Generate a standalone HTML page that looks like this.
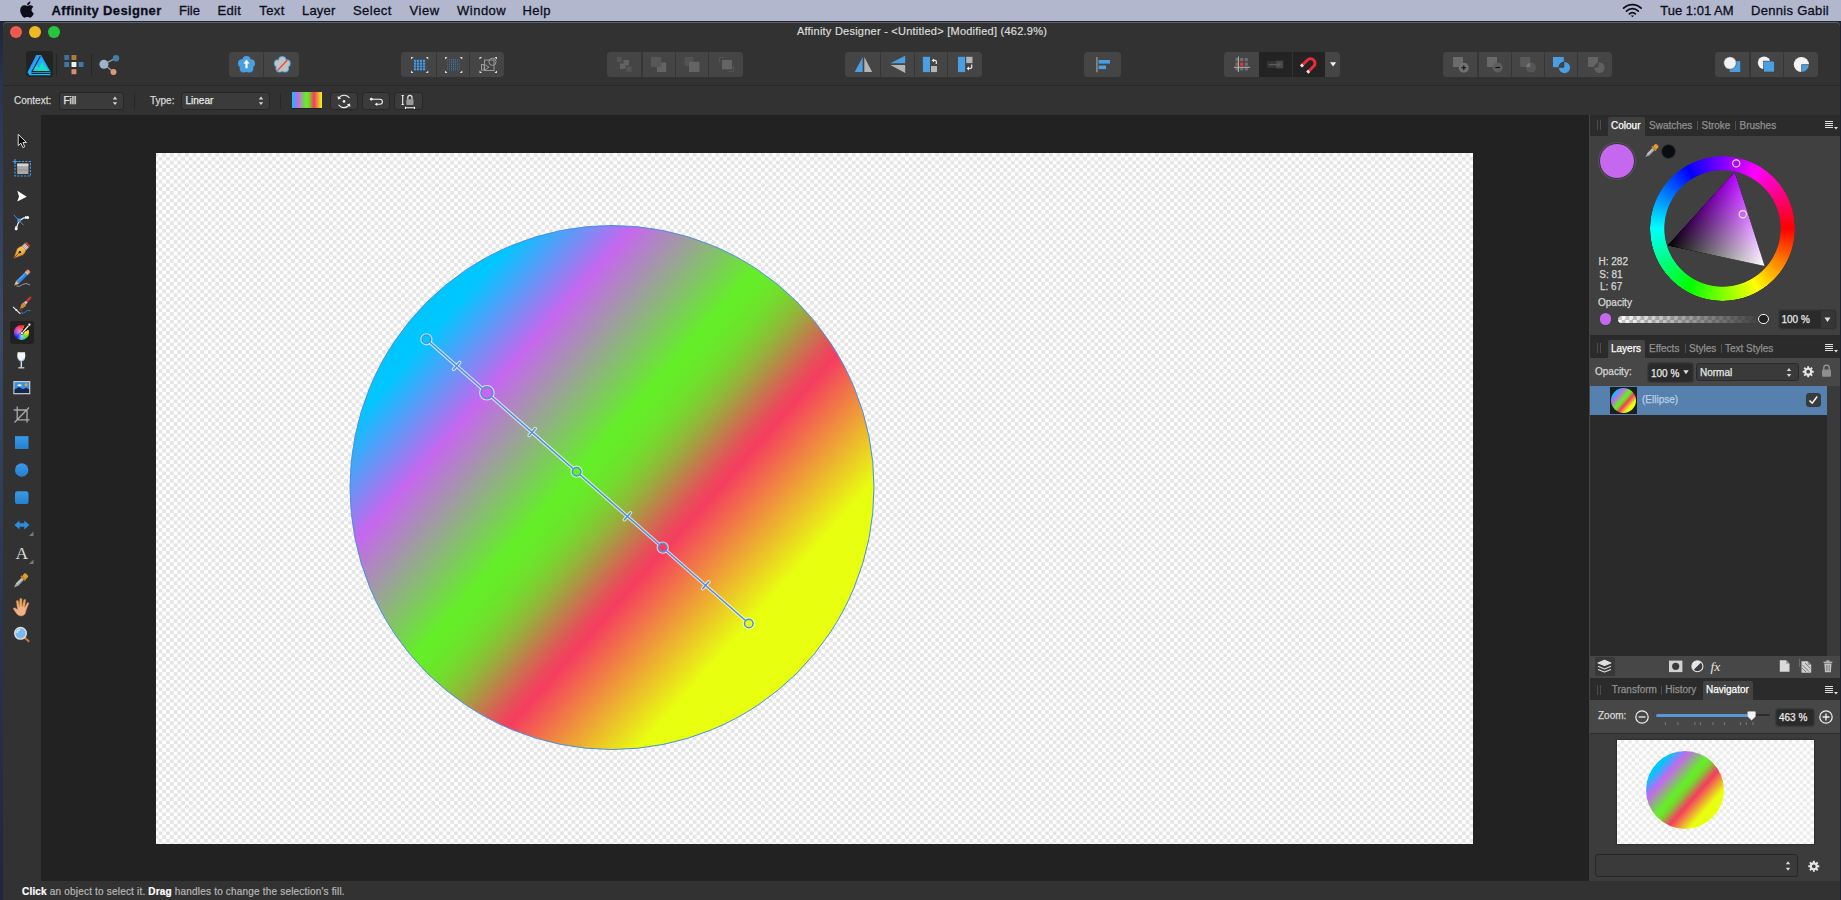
<!DOCTYPE html>
<html lang="en">
<head>
<meta charset="utf-8">
<title>Affinity Designer</title>
<style>
*{box-sizing:border-box;margin:0;padding:0}
html,body{width:1841px;height:900px;overflow:hidden;background:linear-gradient(180deg,#1a2036 0,#2a3550 10%,#3a4a68 35%,#2e3a55 60%,#262e48 80%,#1e2640 100%);font-family:"Liberation Sans",sans-serif;}
.abs{position:absolute}
#menubar{position:absolute;left:0;top:0;width:1841px;height:21px;background:#b2b7ce;color:#0b0e1a;font-size:13px;}
#menubar span{position:absolute;top:2.600px;line-height:16px;white-space:nowrap;-webkit-text-stroke:.3px}
#win{position:absolute;left:3px;top:22px;width:1836.600px;height:878px;background:#323232;border-radius:4px 4px 0 0;overflow:hidden;box-shadow:inset 0 1px 0 #606060}
#title{-webkit-text-stroke:.2px;position:absolute;left:0;top:0;width:1838px;height:22px;color:#dcdcdc;font-size:11px;letter-spacing:.24px;text-align:center;line-height:19px}
.tl{position:absolute;top:4px;width:12px;height:12px;border-radius:50%}
#sep1{position:absolute;left:0;top:63px;width:1838px;height:1px;background:#282828}
.grp{position:absolute;top:30px;height:26px;background:#454545;border-radius:4px;overflow:hidden}
.grp i{position:absolute;top:0;width:1px;height:26px;background:#323232}
#ctx{position:absolute;left:0;top:64px;width:1838px;height:29px;font-size:10px;color:#d6d6d6}
.dd{position:absolute;top:6px;height:18px;background:#2b2b2b;border:1px solid #444444;border-radius:3px;color:#dedede;font-size:10px;line-height:16px;padding-left:4px}
#tools{position:absolute;left:0;top:93px;width:38px;height:766px;background:#323232}
#canvas{position:absolute;left:38px;top:93px;width:1548px;height:766px;background:#222222}
#doc{position:absolute;left:115px;top:37.600px;width:1316.500px;height:691px;background:repeating-conic-gradient(#e5e5e5 0 25%,#fff 0 50%) 2.500px 0.100px/7.582px 7.582px}
#right{position:absolute;left:1586px;top:93px;width:252px;height:766px;background:#454545}
#status{position:absolute;left:0;top:859px;width:1838px;height:19px;background:#323232;color:#b8b8b8;font-size:10px;line-height:22px;letter-spacing:.19px;-webkit-text-stroke:.2px}

#L{position:absolute;left:0;top:0;width:1841px;height:900px;font-size:10px;color:#d8d8d8}
#L div,#L span,#L svg{position:absolute}
.t{line-height:12px;white-space:nowrap;-webkit-text-stroke:.25px}
.tabbar{left:1590px;width:251px;height:20.600px;background:#2b2b2b}
.tab{background:#404040;height:18.600px;border-radius:2px 2px 0 0}
.grey{color:#8f8f8f}
.pb{background:#404040;left:1590px;width:251px}
.inp{background:#2a2a2a;border:1px solid #303030;border-radius:3px;box-shadow:0 0 0 1px #3a3a3a}
</style>
</head>
<body>
<div id="menubar">
<svg class="abs" style="left:19.5px;top:1.2px" width="14" height="17" viewBox="0 20 384 470"><path fill="#0b0e1a" d="M318.7 268.7c-.2-36.700 16.400-64.400 50-84.800-18.800-26.900-47.200-41.700-84.700-44.600-35.500-2.800-74.300 20.700-88.500 20.700-15 0-49.400-19.700-76.400-19.700C63.300 141.200 4 184.800 4 273.500q0 39.300 14.400 81.200c12.800 36.700 59 126.700 107.200 125.200 25.200-.6 43-17.900 75.800-17.900 31.800 0 48.300 17.900 76.400 17.900 48.600-.7 90.400-82.500 102.600-119.300-65.200-30.700-61.700-90-61.700-91.900zm-56.600-164.200c27.300-32.400 24.800-61.900 24-72.500-24.100 1.400-52 16.400-67.900 34.900-17.500 19.800-27.800 44.300-25.600 71.900 26.100 2 49.900-11.400 69.500-34.300z"/></svg>
<span style="left:51.5px;font-weight:bold;letter-spacing:.36px">Affinity Designer</span>
<span style="left:179px">File</span>
<span style="left:217.5px;letter-spacing:.3px">Edit</span>
<span style="left:259.3px;letter-spacing:.4px">Text</span>
<span style="left:302px;letter-spacing:.2px">Layer</span>
<span style="left:353px;letter-spacing:.45px">Select</span>
<span style="left:409.5px;letter-spacing:.6px">View</span>
<span style="left:457px;letter-spacing:.5px">Window</span>
<span style="left:522.5px;letter-spacing:.4px">Help</span>
<svg class="abs" style="left:1620px;top:2px" width="25" height="17" viewBox="1620 2 25 17"><g fill="none" stroke="#0b0e1a" stroke-width="1.7" stroke-linecap="round"><path d="M1623.6 8.200a12.400 12.400 0 0 1 17.600 0"/><path d="M1626.500 11.100a8.300 8.300 0 0 1 11.800 0"/><path d="M1629.400 13.900a4.200 4.200 0 0 1 6 0"/></g><path d="M1632.400 17.300l-1.700 -1.800h3.400z" fill="#0b0e1a"/></svg>
<span style="left:1660.300px">Tue 1:01 AM</span>
<span style="left:1751px;letter-spacing:.3px">Dennis Gabil</span>
</div>
<div id="win">
<div id="title">Affinity Designer - &lt;Untitled&gt; [Modified] (462.9%)</div>
<div class="tl" style="left:7px;background:#f25a4e"></div>
<div class="tl" style="left:26px;background:#f0b823"></div>
<div class="tl" style="left:45px;background:#27c73d"></div>
<div id="sep1"></div>
<div id="ctx"></div>
<div id="tools"></div>
<div id="canvas">
<div id="doc"></div>
<svg class="abs" style="left:0;top:0" width="1548" height="766" viewBox="41 115 1548 766">
<defs><linearGradient id="g1" gradientUnits="userSpaceOnUse" x1="426.4" y1="339.3" x2="748.8" y2="623.5">
<stop offset="0" stop-color="#00c6ff"/><stop offset="0.1878" stop-color="#c667ef"/><stop offset="0.4659" stop-color="#64ee28"/><stop offset="0.4830" stop-color="#65ed28"/><stop offset="0.5002" stop-color="#67ea29"/><stop offset="0.5173" stop-color="#6ae62a"/><stop offset="0.5344" stop-color="#6fe12c"/><stop offset="0.5516" stop-color="#75d92f"/><stop offset="0.5687" stop-color="#7dd031"/><stop offset="0.5858" stop-color="#86c435"/><stop offset="0.6029" stop-color="#91b739"/><stop offset="0.6201" stop-color="#9ea73e"/><stop offset="0.6372" stop-color="#ab9743"/><stop offset="0.6543" stop-color="#ba8548"/><stop offset="0.6715" stop-color="#c8744e"/><stop offset="0.6886" stop-color="#d66353"/><stop offset="0.7057" stop-color="#e35358"/><stop offset="0.7229" stop-color="#ee465c"/><stop offset="0.7400" stop-color="#f53d5f"/><stop offset="1" stop-color="#e8ff10"/>
</linearGradient></defs>
<circle cx="612" cy="487.5" r="262" fill="url(#g1)" stroke="#4a8fe0" stroke-width="1"/>
<g fill="none" stroke="#ffffff" stroke-opacity="0.7" stroke-width="3.6" stroke-linecap="round">
<line x1="426.4" y1="339.3" x2="748.8" y2="623.5"/><path d="M453.7 369.3L459.7 362.5M529.2 435.4L535.2 428.6M624.4 519.7L630.4 512.9M702.8 588.6L708.8 581.8"/><circle cx="426.4" cy="339.3" r="4.3"/><circle cx="486.9" cy="392.7" r="6.0"/><circle cx="576.6" cy="471.7" r="4.3"/><circle cx="662.7" cy="547.6" r="4.3"/><circle cx="748.8" cy="623.5" r="4.3"/>
</g>
<g stroke="#4a90e2" stroke-width="1.5" stroke-linecap="round">
<line x1="426.4" y1="339.3" x2="748.8" y2="623.5"/><path d="M453.7 369.3L459.7 362.5M529.2 435.4L535.2 428.6M624.4 519.7L630.4 512.9M702.8 588.6L708.8 581.8"/><circle cx="426.4" cy="339.3" r="4.3" fill="#00c6ff"/><circle cx="486.9" cy="392.7" r="6.0" fill="#c667ef"/><circle cx="576.6" cy="471.7" r="4.3" fill="#64ee28"/><circle cx="662.7" cy="547.6" r="4.3" fill="#f53d5f"/><circle cx="748.8" cy="623.5" r="4.3" fill="#e8ff10"/>
</g>
</svg>
</div>
<div id="right"></div>
<div id="status"><span class="abs" style="left:19px"><b style="color:#fff">Click</b> an object to select it. <b style="color:#fff">Drag</b> handles to change the selection's fill.</span></div>
</div>

<div id="L">

<div style="left:1839.600px;top:25px;width:1.400px;height:875px;background:#1c2238;z-index:9"></div>
<!-- toolbar -->
<div style="left:228.5px;top:52px;width:70.3px;height:24.8px;background:#454545;border-radius:3.5px"></div>
<div style="left:263.2px;top:52px;width:1.2px;height:24.8px;background:#363636"></div>
<div style="left:401.0px;top:52px;width:103.0px;height:24.8px;background:#454545;border-radius:3.5px"></div>
<div style="left:435.7px;top:52px;width:1.2px;height:24.8px;background:#363636"></div>
<div style="left:468.9px;top:52px;width:1.2px;height:24.8px;background:#363636"></div>
<div style="left:606.7px;top:52px;width:136.3px;height:24.8px;background:#454545;border-radius:3.5px"></div>
<div style="left:641.4px;top:52px;width:1.2px;height:24.8px;background:#363636"></div>
<div style="left:674.8px;top:52px;width:1.2px;height:24.8px;background:#363636"></div>
<div style="left:708.0px;top:52px;width:1.2px;height:24.8px;background:#363636"></div>
<div style="left:845.3px;top:52px;width:136.7px;height:24.8px;background:#454545;border-radius:3.5px"></div>
<div style="left:879.8px;top:52px;width:1.2px;height:24.8px;background:#363636"></div>
<div style="left:913.6px;top:52px;width:1.2px;height:24.8px;background:#363636"></div>
<div style="left:946.8px;top:52px;width:1.2px;height:24.8px;background:#363636"></div>
<div style="left:1084.0px;top:52px;width:37.3px;height:24.8px;background:#454545;border-radius:3.5px"></div>
<div style="left:1223.5px;top:52px;width:116.5px;height:24.8px;background:#454545;border-radius:3.5px"></div>
<div style="left:1442.5px;top:52px;width:169.5px;height:24.8px;background:#454545;border-radius:3.5px"></div>
<div style="left:1477.4px;top:52px;width:1.2px;height:24.8px;background:#363636"></div>
<div style="left:1510.6px;top:52px;width:1.2px;height:24.8px;background:#363636"></div>
<div style="left:1543.8px;top:52px;width:1.2px;height:24.8px;background:#363636"></div>
<div style="left:1576.9px;top:52px;width:1.2px;height:24.8px;background:#363636"></div>
<div style="left:1714.6px;top:52px;width:103.4px;height:24.8px;background:#454545;border-radius:3.5px"></div>
<div style="left:1749.4px;top:52px;width:1.2px;height:24.8px;background:#363636"></div>
<div style="left:1782.8px;top:52px;width:1.2px;height:24.8px;background:#363636"></div>
<div style="left:1259.2px;top:52px;width:65.6px;height:24.8px;background:#232323"></div>
<div style="left:1292px;top:52px;width:1.2px;height:24.8px;background:#333"></div>
<div style="left:26px;top:51.3px;width:26.8px;height:26.2px;background:#232323;border-radius:3.5px"></div>
<div style="left:56px;top:54px;width:1px;height:21.5px;background:#252525"></div>
<div style="left:91px;top:54px;width:1px;height:21.5px;background:#252525"></div>
<svg style="left:0;top:0" width="1841" height="120" viewBox="0 0 1841 120">
<defs><linearGradient id="afg" x1="0" y1="0" x2="1" y2="1"><stop offset="0" stop-color="#2a8cff"/><stop offset="1" stop-color="#10d0f8"/></linearGradient></defs>
<path d="M36.300 55L41 55L50.300 71.500L50.300 75.300L29.500 75.300L27.500 72.200Z" fill="url(#afg)"/>
<path d="M40.300 56.200L32 71.600H49.800M31.500 73.500h18.500" fill="none" stroke="#1a2436" stroke-width="1.100"/>
<path d="M33.600 70.800L37 65.300L39 68.500L41.800 61.500L47.500 70.800z" fill="#18e8b0" opacity=".8"/>
<rect x="64.3" y="55.0" width="4.9" height="5" fill="#3d6f9e"/><rect x="71.5" y="55.0" width="4.9" height="5" fill="#b07a3c"/><rect x="64.3" y="62.0" width="4.9" height="5" fill="#3f78a8"/><rect x="71.5" y="62.0" width="4.9" height="5" fill="#f2f2f2"/><rect x="78.6" y="62.0" width="4.9" height="5" fill="#3f78b0"/><rect x="71.5" y="69.2" width="4.9" height="5" fill="#d8906c"/>
<path d="M104 64.2L116 58.2M104 64.2L113.5 72.1" stroke="#9a9a9a" stroke-width="1.3"/><circle cx="103.9" cy="64.2" r="4.5" fill="#9fb2cc"/><circle cx="116" cy="58.2" r="3.2" fill="#3f7fa8"/><circle cx="113.5" cy="72.1" r="3" fill="#dc9874"/>
<g fill="#4a9fe2"><circle cx="246.50" cy="60.20" r="4.10"/><circle cx="250.87" cy="63.38" r="4.10"/><circle cx="249.20" cy="68.52" r="4.10"/><circle cx="243.80" cy="68.52" r="4.10"/><circle cx="242.13" cy="63.38" r="4.10"/><circle cx="246.50" cy="64.80" r="4.60"/></g><path d="M246.5 59.5l3 4h-1.9v4.8h-2.2v-4.8h-1.9z" fill="#fff"/>
<g fill="#4a9fe2"><circle cx="282.30" cy="60.20" r="4.10"/><circle cx="286.67" cy="63.38" r="4.10"/><circle cx="285.00" cy="68.52" r="4.10"/><circle cx="279.60" cy="68.52" r="4.10"/><circle cx="277.93" cy="63.38" r="4.10"/><circle cx="282.30" cy="64.80" r="4.60"/></g><g fill="#c2c2c2"><circle cx="282.30" cy="60.40" r="3.30"/><circle cx="286.48" cy="63.44" r="3.30"/><circle cx="284.89" cy="68.36" r="3.30"/><circle cx="279.71" cy="68.36" r="3.30"/><circle cx="278.12" cy="63.44" r="3.30"/><circle cx="282.30" cy="64.80" r="4.40"/></g><path d="M277.3 70.6L287.2 60.3" stroke="#f0452e" stroke-width="1.3"/>
<rect x="414.0" y="59.8" width="2.2" height="2.1" fill="#3f9df0"/><rect x="414.0" y="62.6" width="2.2" height="2.1" fill="#3f9df0"/><rect x="414.0" y="65.4" width="2.2" height="2.1" fill="#3f9df0"/><rect x="414.0" y="68.2" width="2.2" height="2.1" fill="#3f9df0"/><rect x="417.0" y="59.8" width="2.2" height="2.1" fill="#3f9df0"/><rect x="417.0" y="62.6" width="2.2" height="2.1" fill="#3f9df0"/><rect x="417.0" y="65.4" width="2.2" height="2.1" fill="#3f9df0"/><rect x="417.0" y="68.2" width="2.2" height="2.1" fill="#3f9df0"/><rect x="420.0" y="59.8" width="2.2" height="2.1" fill="#3f9df0"/><rect x="420.0" y="62.6" width="2.2" height="2.1" fill="#3f9df0"/><rect x="420.0" y="65.4" width="2.2" height="2.1" fill="#3f9df0"/><rect x="420.0" y="68.2" width="2.2" height="2.1" fill="#3f9df0"/><rect x="423.0" y="59.8" width="2.2" height="2.1" fill="#3f9df0"/><rect x="423.0" y="62.6" width="2.2" height="2.1" fill="#3f9df0"/><rect x="423.0" y="65.4" width="2.2" height="2.1" fill="#3f9df0"/><rect x="423.0" y="68.2" width="2.2" height="2.1" fill="#3f9df0"/><path d="M411.0 57.0h2.6l-2.6 2.6zM428.3 57.0h-2.6l2.6 2.6zM411.0 73.0h2.6l-2.6 -2.6zM428.3 73.0h-2.6l2.6 -2.6z" fill="#e0e0e0"/>
<path d="M447.5 59v12" stroke="#3a80c0" stroke-width=".9" stroke-dasharray="1.5 .8" opacity="0.50"/><path d="M449.5 59v12" stroke="#3a80c0" stroke-width=".9" stroke-dasharray="1.5 .8" opacity="0.67"/><path d="M451.5 59v12" stroke="#3a80c0" stroke-width=".9" stroke-dasharray="1.5 .8" opacity="0.83"/><path d="M453.5 59v12" stroke="#3a80c0" stroke-width=".9" stroke-dasharray="1.5 .8" opacity="1.00"/><path d="M455.5 59v12" stroke="#3a80c0" stroke-width=".9" stroke-dasharray="1.5 .8" opacity="0.83"/><path d="M457.5 59v12" stroke="#3a80c0" stroke-width=".9" stroke-dasharray="1.5 .8" opacity="0.67"/><path d="M459.5 59v12" stroke="#3a80c0" stroke-width=".9" stroke-dasharray="1.5 .8" opacity="0.50"/><path d="M445.0 57.0h2.6l-2.6 2.6zM462.3 57.0h-2.6l2.6 2.6zM445.0 73.0h2.6l-2.6 -2.6zM462.3 73.0h-2.6l2.6 -2.6z" fill="#e0e0e0"/>
<g fill="none" stroke="#9a9a9a" stroke-width="1"><rect x="484.5" y="60" width="9.5" height="10.5"/><circle cx="492.5" cy="61.8" r="3.6"/><rect x="481.5" y="64.5" width="2.6" height="5.5"/><path d="M484.5 64.5l4.5 2.7l-4.5 2.8"/></g><path d="M479.5 57.0h2.6l-2.6 2.6zM497.0 57.0h-2.6l2.6 2.6zM479.5 73.0h2.6l-2.6 -2.6zM497.0 73.0h-2.6l2.6 -2.6z" fill="#e0e0e0"/>
<rect x="617" y="57" width="4.6" height="5" fill="#555"/><rect x="626.6" y="66.5" width="5" height="5.3" fill="#555"/><path d="M623.5 60h5.5v5.5h-3.5v3.5h-5.5v-5.5h3.5z" fill="#626262"/>
<rect x="651" y="57" width="10.2" height="10" fill="#575757"/><path d="M661.2 62.5h5v9.5h-9.2v-5h4.2z" fill="#646464"/>
<rect x="684.5" y="57" width="9" height="9" fill="#535353"/><rect x="689" y="61.8" width="10.4" height="10.2" fill="#646464"/>
<path d="M719.5 62v-4.5h5M733.5 66.5v5h-5" fill="none" stroke="#555" stroke-width="1"/><rect x="722" y="60" width="10" height="9.3" fill="#646464"/>
<path d="M854.7 72.1L862.7 57V72.1z" fill="#4a9fe2"/><path d="M864.3 57V72.1H872.2z" fill="#b4b4b4"/>
<path d="M890.4 63.3L905.2 55.8V63.3z" fill="#4a9fe2"/><path d="M890.4 65H905.2V72.9z" fill="#b4b4b4"/>
<rect x="922.9" y="56.8" width="7.1" height="15.3" fill="#4a9fe2"/><rect x="931" y="66" width="6" height="6.1" fill="#b4b4b4"/><path d="M936.3 64v-2.4q0-1.2-1.2-1.2h-1.8" fill="none" stroke="#f0f0f0" stroke-width="1.2"/><path d="M934 58.5v3.8l-2.3-1.9z" fill="#f0f0f0"/>
<rect x="958" y="56.8" width="7.1" height="15.3" fill="#4a9fe2"/><rect x="966.2" y="56.8" width="6.3" height="6.3" fill="#b4b4b4"/><path d="M971.7 64.6v2.6q0 1.2-1.2 1.2h-2" fill="none" stroke="#f0f0f0" stroke-width="1.2"/><path d="M969 66.4v4l-2.4-2z" fill="#f0f0f0"/>
<path d="M1096.9 57v15.2" stroke="#8a8a8a" stroke-width="1.6"/><rect x="1098.6" y="60" width="11.4" height="3.6" fill="#4a9fe2"/><rect x="1098.6" y="65.5" width="7.4" height="3.6" fill="#4a9fe2"/>
<rect x="1235.5" y="58.0" width="3.2" height="3.2" fill="#6e6e6e"/><rect x="1235.5" y="62.6" width="3.2" height="3.2" fill="#6e6e6e"/><rect x="1235.5" y="67.2" width="3.2" height="3.2" fill="#6e6e6e"/><rect x="1240.1" y="58.0" width="3.2" height="3.2" fill="#6e6e6e"/><rect x="1240.1" y="62.6" width="3.2" height="3.2" fill="#ff2a2a"/><rect x="1240.1" y="67.2" width="3.2" height="3.2" fill="#6e6e6e"/><rect x="1244.7" y="58.0" width="3.2" height="3.2" fill="#6e6e6e"/><rect x="1244.7" y="62.6" width="3.2" height="3.2" fill="#6e6e6e"/><rect x="1244.7" y="67.2" width="3.2" height="3.2" fill="#6e6e6e"/><path d="M1238.4 56.5v15.5M1234 67.3h16" stroke="#bdbdbd" stroke-width=".9"/>
<rect x="1267" y="61" width="9" height="7" fill="#343434"/><rect x="1276" y="60.6" width="7.2" height="7.8" fill="#484848"/><path d="M1269 64.6h10" stroke="#5c5c5c" stroke-width="1.4"/><path d="M1278 62.4l3 2.2l-3 2.2z" fill="#5c5c5c"/>
<g transform="translate(1309.5 64.2) rotate(45)"><path d="M-4.4 6.5V-1.5a4.4 4.4 0 0 1 8.8 0V6.5" fill="none" stroke="#ee2a3a" stroke-width="3"/><path d="M-5.9 5h3v2.6h-3zM2.9 5h3v2.6h-3z" fill="#e8e8e8"/></g>
<path d="M1330 62.2h6.2l-3.1 4.2z" fill="#f0f0f0"/>
<rect x="1453" y="57" width="10" height="10" fill="#6b6b6b"/><circle cx="1463.8" cy="67.7" r="5" fill="#737373"/><path d="M1461.3 67.7h5M1463.8 65.2v5" stroke="#111" stroke-width="1.1"/>
<rect x="1487" y="57" width="10" height="10" fill="#696969"/><circle cx="1497.6" cy="67.5" r="5" fill="#5e5e5e"/><path d="M1495.2 67.5h4.8" stroke="#111" stroke-width="1.1"/>
<rect x="1520.2" y="57" width="10" height="10" fill="#5a5a5a"/><circle cx="1531" cy="67.6" r="5" fill="#565656"/><path d="M1530.2 62.7V67h-4.1a5 5 0 0 1 4.1-4.3z" fill="#777"/>
<rect x="1553" y="57" width="10.8" height="10.2" fill="#4a9fe2"/><circle cx="1564.5" cy="67.6" r="5.6" fill="#4a9fe2"/><path d="M1563.8 62.1V67.2h-4.8a5.6 5.6 0 0 1 4.8-5.1z" fill="#454545" stroke="#333" stroke-width=".8"/>
<rect x="1588" y="57" width="10" height="10" fill="#646464"/><circle cx="1599.5" cy="67.8" r="5.2" fill="#606060"/><path d="M1598 62.9V67h-3.6a5.2 5.2 0 0 1 3.6-4.1z" fill="#4e4e4e" stroke="#3a3a3a" stroke-width=".6"/>
<rect x="1729.7" y="61.1" width="10.5" height="10.9" fill="#4a9fe2"/><circle cx="1730" cy="63" r="6.3" fill="#f2f2f2" stroke="#3a3a3a" stroke-width=".6"/>
<circle cx="1764.1" cy="62.8" r="6.3" fill="#f2f2f2"/><rect x="1763.7" y="61.1" width="10.6" height="10.9" fill="#4a9fe2" stroke="#3a3a3a" stroke-width=".6"/>
<circle cx="1801.4" cy="64.5" r="7.6" fill="#f2f2f2"/><path d="M1801.6 64.6h7.4a7.6 7.6 0 0 1-7.4 7.5z" fill="#4a9fe2" stroke="#3a3a3a" stroke-width=".6"/>
</svg>

<!-- context toolbar -->
<span class="t" style="left:14px;top:94.5px">Context:</span>
<div style="left:59px;top:92px;width:65px;height:17.8px;background:#3b3b3b;border:1px solid #262626;border-radius:3px"></div>
<span class="t" style="left:63.5px;top:94.5px;color:#e8e8e8">Fill</span>
<svg style="left:112px;top:95px" width="6" height="12"><path d="M0.8 4.4L3 1.6l2.2 2.8zM0.8 7.2L3 10l2.2-2.8z" fill="#d8d8d8"/></svg>
<div style="left:134px;top:93px;width:1px;height:16px;background:#262626"></div>
<span class="t" style="left:150px;top:94.5px">Type:</span>
<div style="left:181px;top:92px;width:89px;height:17.8px;background:#3b3b3b;border:1px solid #262626;border-radius:3px"></div>
<span class="t" style="left:185.5px;top:94.5px;color:#e8e8e8">Linear</span>
<svg style="left:258px;top:95px" width="6" height="12"><path d="M0.8 4.4L3 1.6l2.2 2.8zM0.8 7.2L3 10l2.2-2.8z" fill="#d8d8d8"/></svg>
<div style="left:279.5px;top:93px;width:1px;height:16px;background:#262626"></div>
<div style="left:292px;top:92px;width:30px;height:16px;background:linear-gradient(90deg,#00c6ff 0.00%,#c667ef 18.78%,#64ee28 46.59%,#65ed28 48.30%,#67ea29 50.02%,#6ae62a 51.73%,#6fe12c 53.44%,#75d92f 55.16%,#7dd031 56.87%,#86c435 58.58%,#91b739 60.29%,#9ea73e 62.01%,#ab9743 63.72%,#ba8548 65.43%,#c8744e 67.15%,#d66353 68.86%,#e35358 70.57%,#ee465c 72.29%,#f53d5f 74.00%,#e8ff10 100.00%);box-shadow:0 1px 0 #222"></div>
<div style="left:330px;top:92px;width:28px;height:18px;background:#3b3b3b;border:1px solid #262626;border-radius:3px"></div>
<div style="left:361.8px;top:92px;width:28.6px;height:18px;background:#3b3b3b;border:1px solid #262626;border-radius:3px"></div>
<div style="left:394px;top:92px;width:28.6px;height:18px;background:#3b3b3b;border:1px solid #262626;border-radius:3px"></div>
<svg style="left:330px;top:92px" width="93" height="18" viewBox="330 92 93 18">
<g fill="none" stroke="#f2f2f2" stroke-width="1.1"><path d="M338.6 98.6a6.3 6.3 0 0 1 10.8-.6M349.4 104.4a6.3 6.3 0 0 1-10.8.4"/><path d="M371.5 99.2h8.4a2.5 2.5 0 0 1 0 5h-3.2"/><path d="M402.7 95.5v9M401.6 95.5h2.2M401.6 104.5h2.2M405.5 107.8h9M405.5 106.7v2.2M414.5 106.7v2.2"/></g>
<path d="M337.6 96l.4 3.6l3.2-1.2zM350.4 107l-.4-3.6l-3.2 1.2z" fill="#f2f2f2"/><circle cx="344" cy="101.4" r="1.3" fill="#f2f2f2"/>
<circle cx="371.3" cy="99.2" r="1.4" fill="#f2f2f2"/><path d="M377.3 102.4v3.6l-2.6-1.8z" fill="#f2f2f2"/>
<path d="M407.8 99.5v-2a2.1 2.1 0 0 1 4.2 0v2" fill="none" stroke="#e8e8e8" stroke-width="1.2"/><rect x="406.3" y="99.3" width="7.2" height="5.8" rx=".8" fill="#9a9a9a"/>
</svg>
<!-- right panel -->
<div style="left:1589.500px;top:115px;width:251.500px;height:766px;background:#2a2a2a"></div>
<!-- colour panel -->
<div class="tabbar" style="top:114.500px;height:21px"></div>
<div class="tab" style="left:1608px;top:117px;width:37px"></div>
<svg style="left:1596px;top:120px" width="6" height="10"><path d="M1.5 0v10M4.5 0v10" stroke="#4c4c4c" stroke-width="1"/></svg>
<span class="t" style="left:1611px;top:120px;color:#fff">Colour</span>
<span class="t grey" style="left:1649px;top:120px">Swatches</span>
<span class="t grey" style="left:1701.5px;top:120px">Stroke</span>
<span class="t grey" style="left:1739.5px;top:120px">Brushes</span>
<div style="left:1697px;top:121px;width:1px;height:9px;background:#505050"></div>
<div style="left:1735px;top:121px;width:1px;height:9px;background:#505050"></div>
<svg style="left:1825px;top:121px" width="14" height="10"><path d="M0 .5h8M0 2.5h8M0 4.5h8M0 6.5h8" stroke="#e0e0e0" stroke-width="1"/><path d="M9 6h4l-2 2.5z" fill="#e0e0e0"/></svg>
<div class="pb" style="top:135.600px;height:199.400px"></div>
<div style="left:1599px;top:143px;width:36px;height:36px;border-radius:50%;background:#c667ef;border:1.5px solid #303030;box-shadow:0 0 0 1px #555"></div>
<div style="left:1661px;top:144px;width:15px;height:15px;border-radius:50%;background:#0a0c14;border:1px solid #333"></div>
<!-- wheel -->
<div style="left:1649.9px;top:155.7px;width:145px;height:145px;border-radius:50%;background:conic-gradient(from 90deg,#ff0000,#ffff00,#00ff00,#00ffff,#0000ff,#ff00ff,#ff0000);-webkit-mask:radial-gradient(circle,transparent 57.8px,#000 58.6px,#000 72px,transparent 72.6px);mask:radial-gradient(circle,transparent 57.8px,#000 58.6px,#000 72px,transparent 72.6px)"></div>
<svg style="left:1650px;top:155px" width="146" height="146" viewBox="1650 155 146 146">
<defs>
<linearGradient id="tw" gradientUnits="userSpaceOnUse" x1="1764.6" y1="265.9" x2="1701.58" y2="208.38"><stop offset="0" stop-color="#fff"/><stop offset="1" stop-color="#000"/></linearGradient>
<linearGradient id="tk" gradientUnits="userSpaceOnUse" x1="1734.7" y1="172.1" x2="1717.06" y2="255.89"><stop offset="0" stop-color="#b300ff"/><stop offset="1" stop-color="#000"/></linearGradient>
</defs>
<g style="isolation:isolate">
<polygon points="1734.7,172.1 1667.7,245.5 1764.6,265.9" fill="url(#tk)"/>
<polygon points="1734.7,172.1 1667.7,245.5 1764.6,265.9" fill="url(#tw)" style="mix-blend-mode:plus-lighter"/>
</g>
<circle cx="1736.2" cy="163.4" r="3.6" fill="#b300ff" stroke="#e6e6e6" stroke-width="1.2"/>
<circle cx="1742.8" cy="214.3" r="3.6" fill="#c667ef" stroke="#e6e6e6" stroke-width="1.2"/>
</svg>
<span class="t" style="left:1598.5px;top:255.5px">H: 282</span>
<span class="t" style="left:1599.3px;top:269.200px">S: 81</span>
<span class="t" style="left:1600px;top:281px">L: 67</span>
<span class="t" style="left:1598px;top:297.300px">Opacity</span>
<div style="left:1599.5px;top:313.3px;width:11.6px;height:11.6px;border-radius:50%;background:#c667ef"></div>
<div style="left:1618px;top:315.5px;width:146px;height:7.5px;border-radius:4px;background:linear-gradient(90deg,rgba(71,71,71,0) 0%,#3a3a3a 100%),repeating-conic-gradient(#fff 0 25%,#c8c8c8 0 50%) 0 0/7.5px 7.5px"></div>
<div style="left:1758.4px;top:313.5px;width:10.6px;height:10.6px;border-radius:50%;background:#222;border:1.6px solid #f4f4f4"></div>
<div class="inp" style="left:1778.5px;top:310px;width:57px;height:19px"></div>
<div style="left:1820px;top:311px;width:14.5px;height:17px;background:#363636;border-left:1px solid #2a2a2a;border-radius:0 2px 2px 0"></div>
<span class="t" style="left:1781.5px;top:314px;color:#e8e8e8">100 %</span>
<svg style="left:1824px;top:317px" width="8" height="6"><path d="M0.5 0.5h6l-3 4.5z" fill="#e0e0e0"/></svg>

<!-- layers panel -->
<div class="tabbar" style="top:337.5px"></div>
<div class="tab" style="left:1608px;top:339.500px;width:37px;background:#454545"></div>
<svg style="left:1596px;top:342.5px" width="6" height="10"><path d="M1.5 0v10M4.5 0v10" stroke="#4c4c4c" stroke-width="1"/></svg>
<span class="t" style="left:1611px;top:342.5px;color:#fff">Layers</span>
<span class="t grey" style="left:1649px;top:342.5px">Effects</span>
<span class="t grey" style="left:1689px;top:342.5px">Styles</span>
<span class="t grey" style="left:1725px;top:342.5px">Text Styles</span>
<div style="left:1685px;top:343.5px;width:1px;height:9px;background:#505050"></div>
<div style="left:1721px;top:343.5px;width:1px;height:9px;background:#505050"></div>
<svg style="left:1825px;top:343.5px" width="14" height="10"><path d="M0 .5h8M0 2.5h8M0 4.5h8M0 6.5h8" stroke="#e0e0e0" stroke-width="1"/><path d="M9 6h4l-2 2.5z" fill="#e0e0e0"/></svg>
<div class="pb" style="top:357.500px;height:28px;background:#474747"></div>
<span class="t" style="left:1595px;top:365.600px">Opacity:</span>
<div class="inp" style="left:1648px;top:362.5px;width:45px;height:19px"></div>
<span class="t" style="left:1651px;top:367.600px;color:#e8e8e8">100 %</span>
<svg style="left:1683px;top:370px" width="7" height="5"><path d="M0.3 0.3h5.4l-2.7 4z" fill="#e0e0e0"/></svg>
<div style="left:1695.600px;top:362.500px;width:103px;height:18.5px;background:#3a3a3a;border:1px solid #2a2a2a;border-radius:3px"></div>
<span class="t" style="left:1700px;top:366.600px;color:#e8e8e8">Normal</span>
<svg style="left:1786px;top:366.5px" width="6" height="11"><path d="M0.8 4L3 1l2.2 3zM0.8 7L3 10l2.2-3z" fill="#d8d8d8"/></svg>
<div style="left:1590px;top:386px;width:236.5px;height:29px;background:#5680ad"></div>
<div style="left:1826.5px;top:386px;width:14.5px;height:270px;background:#3a3a3a"></div>
<div style="left:1610px;top:387px;width:27px;height:26.5px;background:#1e1e1e"></div>
<div style="left:1611px;top:387.8px;width:25px;height:25px;border-radius:50%;background:linear-gradient(131.4deg,#00c6ff 17.90%,#c667ef 28.81%,#64ee28 44.97%,#65ed28 45.96%,#67ea29 46.96%,#6ae62a 47.96%,#6fe12c 48.95%,#75d92f 49.95%,#7dd031 50.94%,#86c435 51.93%,#91b739 52.93%,#9ea73e 53.93%,#ab9743 54.92%,#ba8548 55.91%,#c8744e 56.91%,#d66353 57.91%,#e35358 58.90%,#ee465c 59.90%,#f53d5f 60.89%,#e8ff10 76.00%)"></div>
<span class="t" style="left:1642px;top:394.200px;color:#bcd0e6">(Ellipse)</span>
<div style="left:1806px;top:392.5px;width:14.5px;height:14px;background:#3b3b3b;border-radius:3px;border:1px solid #2e3a48"></div>
<svg style="left:1808px;top:394.5px" width="11" height="10"><path d="M1.5 5.5L4.2 8.2L9.2 1.5" fill="none" stroke="#fff" stroke-width="1.5"/></svg>
<!-- layers bottom bar -->
<div class="pb" style="top:655.500px;height:22.500px;background:#474747"></div>
<div style="left:1594.5px;top:657.3px;width:20px;height:18.5px;background:#383838;border-radius:2px"></div>
<!-- navigator -->
<div class="tabbar" style="top:679.500px"></div>
<div class="tab" style="left:1703px;top:681px;width:50px;height:18.500px;background:#434343"></div>
<svg style="left:1596px;top:685px" width="6" height="10"><path d="M1.5 0v10M4.5 0v10" stroke="#4c4c4c" stroke-width="1"/></svg>
<span class="t grey" style="left:1611.7px;top:684.300px">Transform</span>
<span class="t grey" style="left:1665.2px;top:684.300px">History</span>
<span class="t" style="left:1706px;top:684.300px;color:#fff">Navigator</span>
<div style="left:1661px;top:686px;width:1px;height:9px;background:#505050"></div>
<svg style="left:1825px;top:686px" width="14" height="10"><path d="M0 .5h8M0 2.5h8M0 4.5h8M0 6.5h8" stroke="#e0e0e0" stroke-width="1"/><path d="M9 6h4l-2 2.5z" fill="#e0e0e0"/></svg>
<div class="pb" style="top:699.500px;height:33.500px;background:#474747;box-shadow:0 1px 0 #2e2e2e"></div>
<div class="pb" style="left:1588.500px;width:252.500px;top:734px;height:147px;background:#3c3c3c"></div>
<span class="t" style="left:1598px;top:709.700px">Zoom:</span>
<svg style="left:1634px;top:709px" width="16" height="16"><circle cx="8" cy="8" r="6.2" fill="none" stroke="#f0f0f0" stroke-width="1.2"/><path d="M4.5 8h7" stroke="#f0f0f0" stroke-width="1.3"/></svg>
<svg style="left:1818px;top:709.3px" width="16" height="16"><circle cx="8" cy="8" r="6.2" fill="none" stroke="#f0f0f0" stroke-width="1.2"/><path d="M4.5 8h7M8 4.5v7" stroke="#f0f0f0" stroke-width="1.3"/></svg>
<div style="left:1656px;top:714px;width:113.5px;height:2px;background:#2c2c2c;border-radius:1px"></div>
<div style="left:1656px;top:713.5px;width:96px;height:3px;background:#5a96d8;border-radius:1.5px"></div>
<svg style="left:1747px;top:711px" width="10" height="10"><path d="M0.7 1.2q0-.7.7-.7h6.4q.7 0 .7.7v4.3L4.6 9.3L.7 5.5z" fill="#f4f4f4" stroke="#bbb" stroke-width=".5"/></svg>
<svg style="left:1660px;top:722px" width="100" height="3"><path d="M5.4 0v3M17.9 0v3M34.9 0v3M40.4 0v3M53 0v3M64.5 0v3M80.5 0v3M86.3 0v3M93 0v3" stroke="#7a7a7a" stroke-width="1"/></svg>
<div class="inp" style="left:1775.5px;top:708.5px;width:38px;height:17.5px"></div>
<span class="t" style="left:1779px;top:712px;color:#e8e8e8">463 %</span>
<div style="left:1617px;top:740px;width:197px;height:103.5px;background:repeating-conic-gradient(#ebebeb 0 25%,#fff 0 50%) 0 0/7.300px 7.300px;box-shadow:0 0 2px rgba(0,0,0,.6)"></div>
<div style="left:1646.1px;top:751.1px;width:78px;height:78px;border-radius:50%;background:linear-gradient(131.4deg,#00c6ff 17.90%,#c667ef 28.81%,#64ee28 44.97%,#65ed28 45.96%,#67ea29 46.96%,#6ae62a 47.96%,#6fe12c 48.95%,#75d92f 49.95%,#7dd031 50.94%,#86c435 51.93%,#91b739 52.93%,#9ea73e 53.93%,#ab9743 54.92%,#ba8548 55.91%,#c8744e 56.91%,#d66353 57.91%,#e35358 58.90%,#ee465c 59.90%,#f53d5f 60.89%,#e8ff10 76.00%)"></div>
<div style="left:1595.300px;top:854.300px;width:202.600px;height:22.500px;background:#3a3a3a;border:1px solid #262626;border-radius:3px"></div>
<svg style="left:1784.5px;top:859.5px" width="6" height="12"><path d="M0.8 4.2L3 1.2l2.2 3zM0.8 7.8L3 10.8l2.2-3z" fill="#d8d8d8"/></svg>

<!-- left tools -->
<div style="left:10.200px;top:321.200px;width:23.800px;height:22.600px;background:#212121;border-radius:3px"></div>
<div style="left:14.400px;top:325.300px;width:14.600px;height:14.600px;border-radius:50%;background:conic-gradient(from 0deg,transparent 0 26deg,#212121 26deg 70deg,transparent 70deg),radial-gradient(circle,rgba(255,255,255,.55) 0,rgba(255,255,255,0) 60%),conic-gradient(from 0deg,#ff2020 0deg,#ff8000 40deg,#ffe000 90deg,#40e020 135deg,#60c0ff 180deg,#2020f0 225deg,#a040e0 270deg,#f040a0 320deg,#ff2020 360deg)"></div>
<svg style="left:0;top:120px" width="44" height="540" viewBox="0 120 44 540">
<defs><linearGradient id="bl" x1="0" y1="0" x2="0" y2="1"><stop offset="0" stop-color="#3a9ae8"/><stop offset="1" stop-color="#2480d0"/></linearGradient><linearGradient id="gd" x1="0" y1="0" x2="1" y2="1"><stop offset="0" stop-color="#ffd060"/><stop offset="1" stop-color="#d88a20"/></linearGradient></defs>
<path d="M18.2 134.2V145.6L20.9 143.2L22.9 147.6L24.8 146.7L22.9 142.5H26.5Z" fill="#0c0c0c" stroke="#d8d8d8" stroke-width="1" stroke-linejoin="round"/>
<rect x="15" y="161.5" width="15.4" height="14.5" fill="none" stroke="#3f9df0" stroke-width="1.1" stroke-dasharray="2.2 1.2"/><path d="M12.6 161.5h5M15 159v5" stroke="#3f9df0" stroke-width="1.1"/><rect x="17.2" y="163.6" width="11.2" height="10.4" fill="#a8a8a8"/><rect x="17.2" y="163.6" width="11.2" height="2.6" fill="#d4d4d4"/><path d="M17.2 170.2h11.2" stroke="#8a8a8a" stroke-width=".8"/>
<path d="M17.3 190.7L26.7 196.8L17.3 201.6L19 196.4Z" fill="#fff"/>
<path d="M27.2 217.4Q18.6 217.6 16.2 228.6" fill="none" stroke="#f0f0f0" stroke-width="1.2"/><path d="M13.8 214.8L23.6 225.4" stroke="#3f8fe0" stroke-width="1"/><circle cx="27.6" cy="217.4" r="1.5" fill="#fff"/><circle cx="16.2" cy="228.8" r="1.5" fill="#fff"/><path d="M25 216l3.8 1.4L25 218.8zM14.8 226.5l1.4 3.8l1.4-3.8z" fill="#fff"/><rect x="17.4" y="218.6" width="3.2" height="3.2" fill="#3f9df0"/>
<g transform="translate(22 250) rotate(45)"><path d="M0 11.5L-4.2 2.5Q-4 -1.5 -2.5 -3H2.5Q4 -1.5 4.2 2.5Z" fill="url(#gd)" stroke="#a86a10" stroke-width=".5"/><path d="M0 11V4" stroke="#5a3a08" stroke-width=".7"/><circle cx="0" cy="3" r="1.3" fill="#2a1a08"/><rect x="-2.9" y="-6.8" width="5.8" height="3.8" fill="#d8d8d8"/><path d="M-2.9 -5.5h5.8M-2.9 -4.2h5.8" stroke="#888" stroke-width=".6"/><rect x="-2.9" y="-8.8" width="5.8" height="2" fill="#d83a30"/></g>
<g transform="translate(21.8 278) rotate(45)"><rect x="-2" y="-10.500" width="4" height="3" rx="1" fill="#f09078"/><rect x="-2" y="-7.800" width="4" height="1.600" fill="#d0d0d0"/><rect x="-2" y="-6.200" width="4" height="12.200" fill="#2f86dc"/><path d="M-2 6h4L0 11z" fill="#f0c080"/><path d="M-.9 9.2h1.8L0 11z" fill="#2a5a90"/><path d="M-.8 -6.2v12.2" stroke="#5aa8f0" stroke-width="1"/></g><path d="M16.5 286.2q3 .8 6-1.6t7.500 .3" fill="none" stroke="#9a9a9a" stroke-width="1"/>
<g transform="translate(24.5 304) rotate(42)"><rect x="-1.2" y="-9.5" width="2.4" height="7" rx="1" fill="#d83030"/><rect x="-1.3" y="-3.2" width="2.6" height="2.6" fill="#c8c8c8"/><path d="M-1.8 -.6h3.600q1.200 3 -1.800 7q-3 -4 -1.800 -7z" fill="#c88a40"/></g><path d="M13 306.800L20.400 313.800" stroke="#f0f0f0" stroke-width="1.100"/><circle cx="16.300" cy="309.900" r="1" fill="#f0f0f0"/><path d="M20.500 312.600q3 1.600 5 -.8t5 -1" fill="none" stroke="#2f7ad0" stroke-width="1"/><path d="M18.800 309.200l3.400 1.400" stroke="#c03030" stroke-width=".8"/>
<path d="M22 333.200L29.300 324.800" stroke="#222" stroke-width="2.600"/><path d="M22 333.200L29.300 324.800" stroke="#fff" stroke-width="1.200"/><circle cx="22" cy="333.200" r="1.500" fill="#fff" stroke="#222" stroke-width=".6"/><circle cx="29.400" cy="324.700" r="1.400" fill="#fff" stroke="#222" stroke-width=".6"/>
<path d="M17.600 352.300h7.400q.900 4.200 -.300 7q-1.200 2.200 -3.400 2.200t-3.400 -2.200q-1.200 -2.800 -.300 -7z" fill="#f4f6fa"/><path d="M21.300 361v6.300" stroke="#e8eef8" stroke-width="1.300"/><path d="M18.300 367.800h6" stroke="#c8d4e8" stroke-width="1.300"/><path d="M18 358.500q1 2.800 3.300 2.800t3.300 -2.800" fill="none" stroke="#3f7fd0" stroke-width=".7"/>
<rect x="13.300" y="381" width="17" height="13.300" fill="#c8c8c8"/><rect x="14.500" y="382.200" width="14.600" height="10.900" fill="#3a8fe0"/><path d="M14.500 389.500l4.500 -2.500l4 2.300l3 -1.600l3.100 1.500v3.900h-14.600z" fill="#14284a"/><circle cx="26" cy="384.800" r="1.500" fill="#f0a020"/><ellipse cx="19.600" cy="385.300" rx="2.200" ry="1" fill="#e8f0fa"/>
<path d="M17.200 406.500v13.300h12.300M13.700 410h13.300v12.500M14.500 422.500L29 407.500" fill="none" stroke="#a8a8a8" stroke-width="1.300"/>
<rect x="15" y="436.200" width="13.500" height="12.800" fill="url(#bl)"/>
<circle cx="21.700" cy="470" r="6.700" fill="url(#bl)"/>
<rect x="15" y="491.200" width="13.500" height="12.800" rx="2.600" fill="url(#bl)"/>
<path d="M14.400 525L19.500 520.500V523.300H24.300V520.500L29.400 525L24.300 529.500V526.700H19.500V529.500Z" fill="#2f8ae0"/><path d="M33.500 531.500v4.500h-4.500z" fill="#7a7a7a"/>
<text x="21.700" y="558.800" font-family="Liberation Serif,serif" font-size="17.500" fill="#dcdcdc" text-anchor="middle">A</text><path d="M33.500 559.500v4.500h-4.500z" fill="#7a7a7a"/>
<g transform="translate(20.500 581) rotate(45)"><rect x="-2.600" y="-9.200" width="5.200" height="4.600" rx="2" fill="#e0a030"/><rect x="-3.200" y="-5" width="6.400" height="2" rx=".8" fill="#c88a20"/><path d="M-1.700 -3h3.400v7.500L0 9.200L-1.700 4.500z" fill="#a8a8b0"/><path d="M-.6 -3v8" stroke="#e0e0e8" stroke-width=".8"/></g>
<g fill="#f0b088" stroke="#b87040" stroke-width=".5"><path d="M17.500 609.500l-1.200 -8.200q.3 -1.200 1.500 -.9l1.700 6.400l.3 -8q.9 -1.200 2 -.2l.4 8l1.600 -6.800q1 -1 1.900 -.100l-1 7.600l2.600 -4.600q1.200 -.500 1.600 .6l-2.800 7.200q-.6 5.200 -4.600 5.600q-3.600 .2 -5.400 -3l-2.800 -4.200q.2 -1.500 1.600 -1.200z"/></g><path d="M18.500 600.800l1 5M21.300 599l.2 7M24.500 600.500l-1 6" stroke="#e8a030" stroke-width=".8" fill="none"/>
<path d="M24.500 637.500L29.200 641.800" stroke="#c87a30" stroke-width="2"/><circle cx="20.500" cy="633.300" r="5.800" fill="#7ab8f4" stroke="#e0e0e0" stroke-width="1.400"/><path d="M17 633a3.600 3.600 0 0 1 3.200 -3.400" fill="none" stroke="#d8ecff" stroke-width="1.300"/>
</svg>
<svg style="left:1589px;top:115px" width="252" height="766" viewBox="1589 115 252 766">
<path d="M1813.72 370.74L1813.72 372.66L1812.19 372.66L1811.70 373.84L1812.78 374.92L1811.42 376.28L1810.34 375.20L1809.16 375.69L1809.16 377.22L1807.24 377.22L1807.24 375.69L1806.06 375.20L1804.98 376.28L1803.62 374.92L1804.70 373.84L1804.21 372.66L1802.68 372.66L1802.68 370.74L1804.21 370.74L1804.70 369.56L1803.62 368.48L1804.98 367.12L1806.06 368.20L1807.24 367.71L1807.24 366.18L1809.16 366.18L1809.16 367.71L1810.34 368.20L1811.42 367.12L1812.78 368.48L1811.70 369.56L1812.19 370.74ZM1806.30 371.70a1.90 1.90 0 1 0 3.80 0a1.90 1.90 0 1 0 -3.80 0z" fill="#e6e6e6" fill-rule="evenodd"/><path d="M1819.32 865.34L1819.32 867.26L1817.79 867.26L1817.30 868.44L1818.38 869.52L1817.02 870.88L1815.94 869.80L1814.76 870.29L1814.76 871.82L1812.84 871.82L1812.84 870.29L1811.66 869.80L1810.58 870.88L1809.22 869.52L1810.30 868.44L1809.81 867.26L1808.28 867.26L1808.28 865.34L1809.81 865.34L1810.30 864.16L1809.22 863.08L1810.58 861.72L1811.66 862.80L1812.84 862.31L1812.84 860.78L1814.76 860.78L1814.76 862.31L1815.94 862.80L1817.02 861.72L1818.38 863.08L1817.30 864.16L1817.79 865.34ZM1811.90 866.30a1.90 1.90 0 1 0 3.80 0a1.90 1.90 0 1 0 -3.80 0z" fill="#e6e6e6" fill-rule="evenodd"/>
<path d="M1823.800 369.800v-2a2.700 2.700 0 0 1 5.400 0v2" fill="none" stroke="#9a9a9a" stroke-width="1.300"/><rect x="1822" y="369.500" width="9" height="7.300" rx="1" fill="#8e8e8e"/>
<g transform="translate(1651.500 151) rotate(45)"><rect x="-2.400" y="-8.500" width="4.800" height="4.400" rx="1.800" fill="#e0a030"/><rect x="-3" y="-4.600" width="6" height="1.900" rx=".8" fill="#c88a20"/><path d="M-1.600 -2.700h3.200v7L0 8.600L-1.600 4.300z" fill="#a8a8b0"/><path d="M-.5 -2.700v7.500" stroke="#e0e0e8" stroke-width=".8"/></g>
<g fill="none" stroke="#e0e0e0" stroke-width="1.100" stroke-linejoin="round"><path d="M1604.500 660.200l6.400 2.700l-6.400 2.700l-6.400 -2.700z" fill="#e0e0e0"/><path d="M1598.100 666.200l6.400 2.700l6.400 -2.700M1598.100 669.400l6.400 2.700l6.400 -2.700"/></g>
<rect x="1669" y="660.600" width="13.400" height="11.500" fill="#d2d2d2"/><circle cx="1675.700" cy="666.300" r="3.600" fill="#3a3a3a"/>
<circle cx="1697.400" cy="666.200" r="5.500" fill="#3a3a3a" stroke="#e6e6e6" stroke-width="1.100"/><path d="M1693.500 670.100a5.500 5.500 0 0 1 7.800 -7.800z" fill="#e6e6e6"/>
<text x="1710.500" y="670.500" font-family="Liberation Serif,serif" font-style="italic" font-size="13.500" fill="#e6e6e6">fx</text>
<path d="M1779.800 660.300h6.300l3.400 3.400v8h-9.700z" fill="#dadada"/><path d="M1786.100 660.300v3.400h3.400" fill="#9a9a9a"/>
<path d="M1801.500 661.300h6.300l3.400 3.400v8h-9.700z" fill="#cfcfcf"/><path d="M1807.800 661.300v3.400h3.400" fill="#8a8a8a"/><path d="M1802.500 665l6.500 6.500M1805 663l5.500 5.500M1802 668l4 4" stroke="#666" stroke-width=".8"/><path d="M1799.500 659.500v8" stroke="#aaa" stroke-width=".8" stroke-dasharray="1 1"/>
<path d="M1824.300 663.500h7.200l-.7 8.800h-5.800z" fill="#c4c4c4"/><path d="M1823.500 662.200h8.800M1826.300 661h3.200" stroke="#dadada" stroke-width="1.100"/><path d="M1826.400 665v6M1827.900 665v6M1829.400 665v6" stroke="#777" stroke-width=".7"/>
</svg>
</div>
</body>
</html>
